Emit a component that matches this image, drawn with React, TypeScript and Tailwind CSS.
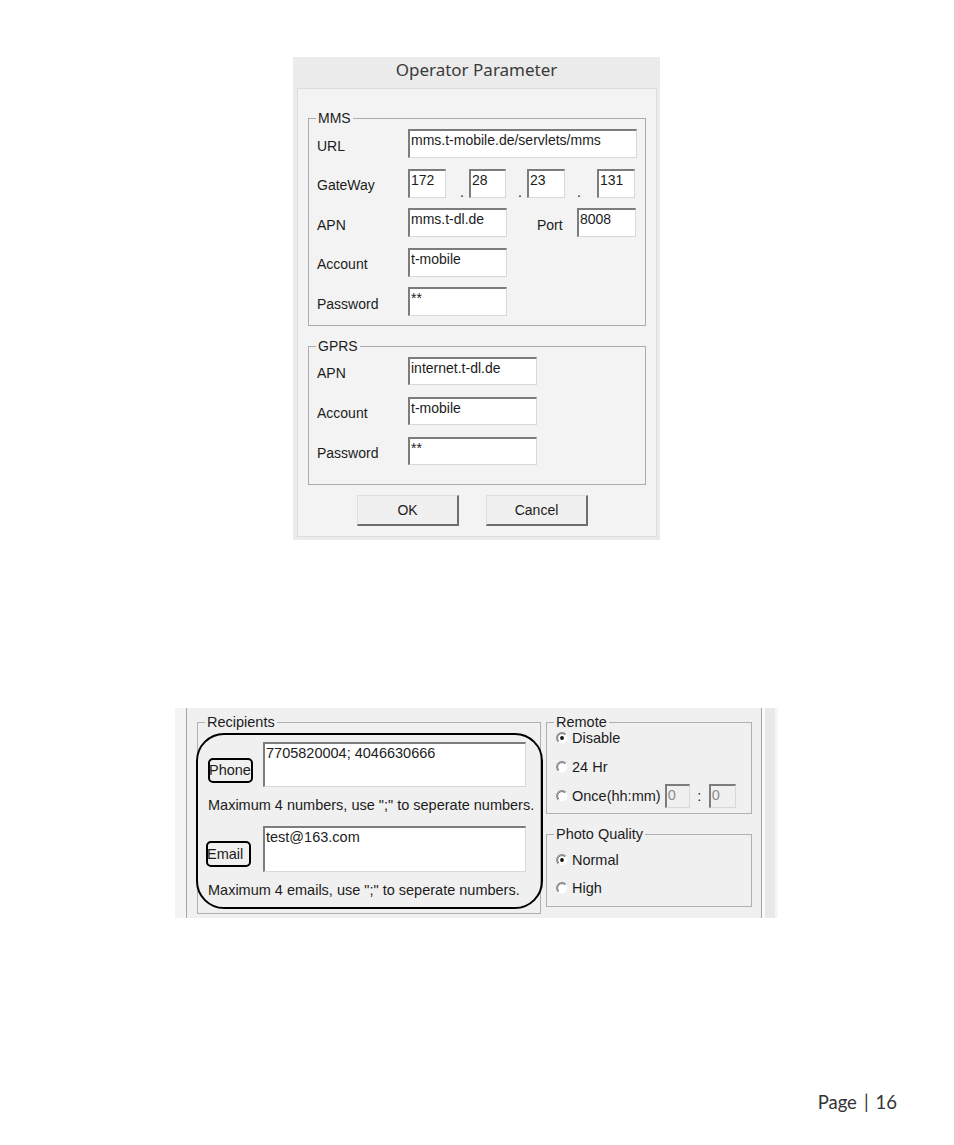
import React from "react";

function Field({ className = "", text = "", disabled = false }: { className?: string; text?: string; disabled?: boolean }) {
  return (
    <div
      className={`shrink-0 border-t-2 border-l-2 border-t-[#7c7c7c] border-l-[#7c7c7c] border-r border-b border-r-[#d8d8d8] border-b-[#d8d8d8] pl-[1px] pt-[1px] leading-[17px] whitespace-nowrap overflow-hidden ${
        disabled ? "bg-[#f0f0f0] text-[#8c8c8c]" : "bg-white"
      } ${className}`}
    >
      {text}
    </div>
  );
}

function Btn({ label }: { label: string }) {
  return (
    <div className="w-[102px] h-[31px] flex items-center justify-center border-t border-l border-t-[#dedede] border-l-[#dedede] border-r-2 border-b-2 border-r-[#6e6e6e] border-b-[#6e6e6e] bg-[#f0f0f0]">
      {label}
    </div>
  );
}

function Row({ label, children, className = "" }: { label: string; children: React.ReactNode; className?: string }) {
  return (
    <div className={`flex items-center ${className}`}>
      <span className="w-[91px] shrink-0 pt-[5px]">{label}</span>
      {children}
    </div>
  );
}

function RadioIcon({ checked = false }: { checked?: boolean }) {
  return (
    <svg width="12" height="12" viewBox="0 0 12 12" className="shrink-0">
      <circle cx="6" cy="6" r="5.4" fill="#ffffff" />
      <path d="M2.2 9.8 A5.3 5.3 0 0 1 9.8 2.2" fill="none" stroke="#8a8a8a" strokeWidth="1.1" />
      <path d="M2.9 9.1 A4.3 4.3 0 0 1 9.1 2.9" fill="none" stroke="#5a5a5a" strokeWidth="0.8" />
      {checked && <circle cx="6" cy="6" r="1.9" fill="#111111" />}
    </svg>
  );
}

function Radio({ label, checked = false, className = "" }: { label: string; checked?: boolean; className?: string }) {
  return (
    <div className={`h-[16px] flex items-center gap-[4px] pl-[9px] ${className}`}>
      <RadioIcon checked={checked} />
      <span className="leading-[16px]">{label}</span>
    </div>
  );
}

function OperatorDialog() {
  return (
    <div className="ml-[293px] mt-[57px] w-[367px] h-[483px] bg-[#ebebeb] flex flex-col text-[14px] shrink-0">
      <div className="h-[31px] pt-[3px] flex justify-center font-['Noto_Sans',sans-serif] text-[17px] leading-[20px] text-[#3a3a3a]">
        Operator Parameter
      </div>
      <div className="ml-[4px] mr-[3px] mb-[3px] flex-1 border border-[#dcdcdc] bg-[#f3f3f3] px-[10px] flex flex-col">
        {/* MMS */}
        <fieldset className="mt-[21px] border border-[#ababab] pb-[9px]">
          <legend className="ml-[7px] px-[2px] leading-[16px]">MMS</legend>
          <div className="mt-[3px] flex flex-col gap-[10.5px] pl-[8px]">
            <Row label="URL">
              <Field className="w-[229px] h-[29px]" text="mms.t-mobile.de/servlets/mms" />
            </Row>
            <Row label="GateWay">
              <Field className="w-[38px] h-[29px]" text="172" />
              <span className="w-[23px] self-end pl-[14px] leading-[12px]">.</span>
              <Field className="w-[37px] h-[29px]" text="28" />
              <span className="w-[21px] self-end pl-[12px] leading-[12px]">.</span>
              <Field className="w-[38px] h-[29px]" text="23" />
              <span className="w-[32px] self-end pl-[12px] leading-[12px]">.</span>
              <Field className="w-[38px] h-[29px]" text="131" />
            </Row>
            <Row label="APN">
              <Field className="w-[99px] h-[29px]" text="mms.t-dl.de" />
              <span className="ml-[30px] w-[40px] pt-[5px]">Port</span>
              <Field className="w-[59px] h-[29px]" text="8008" />
            </Row>
            <Row label="Account">
              <Field className="w-[99px] h-[29px]" text="t-mobile" />
            </Row>
            <Row label="Password">
              <Field className="w-[99px] h-[29px]" text="**" />
            </Row>
          </div>
        </fieldset>

        {/* GPRS */}
        <fieldset className="mt-[12px] border border-[#ababab] pb-[19px]">
          <legend className="ml-[7px] px-[2px] leading-[16px]">GPRS</legend>
          <div className="mt-[3px] flex flex-col gap-[12px] pl-[8px]">
            <Row label="APN">
              <Field className="w-[129px] h-[28px]" text="internet.t-dl.de" />
            </Row>
            <Row label="Account">
              <Field className="w-[129px] h-[28px]" text="t-mobile" />
            </Row>
            <Row label="Password">
              <Field className="w-[129px] h-[28px]" text="**" />
            </Row>
          </div>
        </fieldset>

        <div className="mt-[10px] pl-[49px] flex gap-[27px]">
          <Btn label="OK" />
          <Btn label="Cancel" />
        </div>
      </div>
    </div>
  );
}

function RecipientsPanel() {
  return (
    <div className="ml-[175px] mt-[168px] w-[603px] h-[210px] bg-[#f0f0f0] flex text-[14.5px] shrink-0">
      <div className="w-[12px] border-r border-[#a6a6a6] bg-[#f4f4f4]" />
      <div className="w-[574px] pl-[10px] flex gap-[5px]">
        {/* Recipients */}
        <div className="relative mt-[6px] h-fit">
          <fieldset className="w-[344px] border border-[#b0b0b0] pb-[14px]">
            <legend className="ml-[7px] px-[2px] leading-[16px]">Recipients</legend>
            <div className="mt-[12px] flex items-end pl-[10px]">
              <div className="mb-[4px] w-[45px] h-[25px] border-2 border-black rounded-[5px] flex items-center leading-none overflow-visible">
                <span className="-ml-[1px]">Phone</span>
              </div>
              <Field className="ml-[10px] w-[263px] h-[45px]" text="7705820004; 4046630666" />
            </div>
            <div className="mt-[10px] pl-[10px] leading-[17px] whitespace-nowrap">
              Maximum 4 numbers, use &quot;;&quot; to seperate numbers.
            </div>
            <div className="mt-[12px] flex items-end pl-[8px]">
              <div className="mb-[5px] w-[45px] h-[26px] border-2 border-black rounded-[5px] flex items-center leading-none">
                <span className="-ml-[1px]">Email</span>
              </div>
              <Field className="ml-[12px] w-[263px] h-[46px]" text="test@163.com" />
            </div>
            <div className="mt-[10px] pl-[10px] leading-[17px] whitespace-nowrap">
              Maximum 4 emails, use &quot;;&quot; to seperate numbers.
            </div>
          </fieldset>
          {/* hand-drawn highlight */}
          <div className="absolute left-[-1px] top-[19px] w-[347px] h-[176px] rounded-[28px] border-2 border-black pointer-events-none" />
        </div>

        {/* Right column */}
        <div className="w-[206px] flex flex-col">
          <fieldset className="mt-[6px] border border-[#b0b0b0] pb-[5px]">
            <legend className="ml-[7px] px-[2px] leading-[16px]">Remote</legend>
            <Radio label="Disable" checked />
            <Radio label="24 Hr" className="mt-[13px]" />
            <div className="mt-[8px] h-[25px] flex items-center pl-[9px]">
              <RadioIcon />
              <span className="ml-[4px] leading-[16px]">Once(hh:mm)</span>
              <Field className="ml-[4px] w-[25px] h-[24px]" text="0" disabled />
              <span className="w-[19px] text-center leading-[16px]">:</span>
              <Field className="w-[27px] h-[24px]" text="0" disabled />
            </div>
          </fieldset>
          <fieldset className="mt-[12px] border border-[#b0b0b0] pb-[10px]">
            <legend className="ml-[7px] px-[2px] leading-[16px]">Photo Quality</legend>
            <Radio label="Normal" checked className="mt-[10px]" />
            <Radio label="High" className="mt-[12px]" />
          </fieldset>
        </div>
      </div>
      <div className="flex-1 border-l border-[#a3a3a3] flex">
        <div className="w-[3px] bg-[#fafafa]" />
        <div className="w-[10px] bg-[#e9e9e9]" />
        <div className="flex-1 bg-[#f6f6f6]" />
      </div>
    </div>
  );
}

export default function App() {
  return (
    <div className="w-[954px] h-[1145px] bg-white flex flex-col font-['Liberation_Sans',Arial,sans-serif] text-[#1c1c1c]">
      <OperatorDialog />
      <RecipientsPanel />
      <div className="mt-auto mb-[32px] pr-[57px] flex justify-end font-['Lato',sans-serif] text-[18.5px] leading-[22px] text-[#333]">
        <span>Page</span>
        <span className="ml-[7px]">|</span>
        <span className="ml-[7px]">16</span>
      </div>
    </div>
  );
}
